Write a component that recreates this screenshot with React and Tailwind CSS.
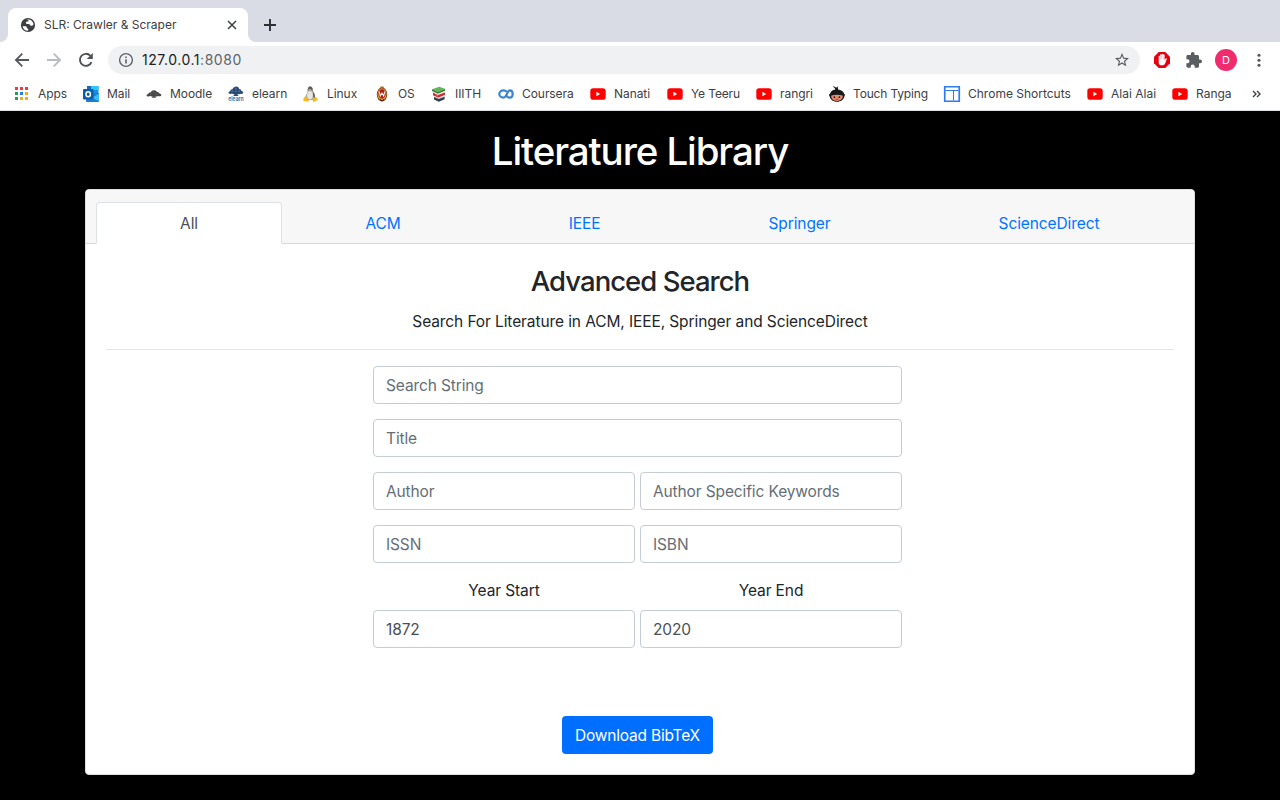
import React from "react";

/* ---------- browser icons ---------- */

const Globe = () => (
  <svg className="size-4 shrink-0" viewBox="0 0 16 16">
    <circle cx="8" cy="8" r="7.1" fill="#3c4043" />
    <path d="M2.6 9.2h2.7c1 0 1.6.7 1.6 1.6v.8h1.2v2.2C5.2 13.9 2.9 12 2.6 9.2z" fill="#fff" />
    <path d="M7 2.6c3.2-.8 6.3 1.6 6.5 4.9-.5 1-1.3 1.3-2.3 1.3-1.2 0-1.3-1.500-2.300-1.700H7.300c-.9 0-1.300-.6-1.300-1.300 0-.8.6-1.200 1.300-1.200h.9c.7 0 .9-1.300-.2-1.300z" fill="#fff" />
  </svg>
);

const Close = () => (
  <svg className="size-3 shrink-0" viewBox="0 0 12 12" stroke="#3c4043" strokeWidth="1.5">
    <path d="M2 2l8 8M10 2l-8 8" />
  </svg>
);

const Plus = () => (
  <svg className="size-3.5 shrink-0" viewBox="0 0 14 14" stroke="#2d2f33" strokeWidth="1.9">
    <path d="M7 1v12M1 7h12" />
  </svg>
);

const Arrow = ({ color, flip }) => (
  <svg className={flip ? "size-4 shrink-0 rotate-180" : "size-4 shrink-0"} viewBox="0 0 16 16" fill="none" stroke={color} strokeWidth="1.8">
    <path d="M15 8H2.3M8.3 1.6L1.9 8l6.4 6.4" />
  </svg>
);

const Reload = () => (
  <svg className="size-4 shrink-0" viewBox="0 0 16 16">
    <path d="M13.5 10.1A6 6 0 1 1 12.4 3.8" fill="none" stroke="#4e5256" strokeWidth="1.9" />
    <path d="M14.8 1v6.100H8.700z" fill="#4e5256" />
  </svg>
);

const Info = () => (
  <svg className="size-4 shrink-0" viewBox="0 0 16 16">
    <circle cx="8" cy="8" r="6.400" fill="none" stroke="#5f6368" strokeWidth="1.400" />
    <path d="M7.200 7.200h1.600v4.300H7.200zM7.200 4.500h1.600V6H7.200z" fill="#5f6368" />
  </svg>
);

const Star = () => (
  <svg className="size-4 shrink-0" viewBox="0 0 24 24" fill="#55595e">
    <path d="M22.500 9.140l-7.550-.65L12 1.540 9.050 8.500l-7.550.640 5.730 4.960L5.510 21.480 12 17.570l6.490 3.910-1.720-7.380 5.730-4.960zM12 15.500l-3.950 2.380 1.050-4.490-3.480-3.020 4.590-.4L12 5.740l1.800 4.240 4.590.4-3.480 3.020 1.050 4.490L12 15.500z" />
  </svg>
);

const AdBlock = () => (
  <svg className="size-4 shrink-0" viewBox="0 0 16 16">
    <path d="M4.700 0h6.600L16 4.700v6.600L11.300 16H4.700L0 11.300V4.700z" fill="#e60012" />
    <path d="M4.700 9V4.300c0-.9 1.400-.9 1.400 0V3c0-.9 1.500-.9 1.500 0v-.4c0-.9 1.500-.9 1.500 0V3c0-.9 1.500-.9 1.500 0v5.300l.9-1.600c.5-.7 1.500-.3 1.200.5l-1.500 4c-.5 1.300-1.400 2.100-2.900 2.100h-.8c-1.800 0-2.800-1.300-2.800-2.900z" fill="#fff" />
    <path d="M6.100 4v3.500M7.600 3.500v4M9.100 3.500v4" stroke="#e60012" strokeWidth=".2" />
  </svg>
);

const Puzzle = () => (
  <svg className="size-4 shrink-0" viewBox="1.500 1 21.500 21.500" fill="#5a5e63">
    <path d="M20.500 11H19V7c0-1.100-.9-2-2-2h-4V3.500a2.500 2.500 0 0 0-5 0V5H4c-1.100 0-2 .9-2 2v3.800h1.500a2.700 2.700 0 0 1 0 5.400H2V20c0 1.100.9 2 2 2h3.800v-1.500a2.700 2.700 0 0 1 5.400 0V22H17c1.100 0 2-.9 2-2v-4h1.500a2.500 2.500 0 0 0 0-5z" />
  </svg>
);

const Dots = () => (
  <svg className="h-4 w-1 shrink-0" viewBox="0 0 4 16" fill="#55595e">
    <circle cx="2" cy="3.200" r="1.550" />
    <circle cx="2" cy="8.200" r="1.550" />
    <circle cx="2" cy="13.200" r="1.550" />
  </svg>
);

/* ---------- bookmark favicons ---------- */

const Fav = ({ children }) => (
  <svg className="size-4 shrink-0 overflow-visible" viewBox="0 0 16 16">{children}</svg>
);

const AppsIcon = () => (
  <Fav>
    {["#f4364c", "#f4364c", "#f4364c", "#1e9e58", "#2a7de1", "#fba919", "#1e9e58", "#fba919", "#fba919"].map((c, i) => (
      <rect key={i} x={1 + (i % 3) * 5} y={1 + Math.floor(i / 3) * 5} width="3" height="3" fill={c} />
    ))}
  </Fav>
);

const Outlook = () => (
  <Fav>
    <path d="M4 0h11.500v8H4z" fill="#1490df" />
    <path d="M4 0h4v4H4z" fill="#0f6cbd" />
    <path d="M8 0h7.500v4H8z" fill="#35c3f3" />
    <path d="M3 8l13-1v8c0 .6-.4 1-1 1H4c-.6 0-1-.4-1-1z" fill="#1a7fd3" />
    <path d="M16 7.500V15l-7-3z" fill="#36bdf2" />
    <rect y="3" width="10.500" height="10.500" rx="1" fill="#0a5cad" />
    <ellipse cx="5.200" cy="8.200" rx="2.200" ry="2.500" fill="none" stroke="#fff" strokeWidth="1.500" />
  </Fav>
);

const Tree = () => (
  <Fav>
    <path d="M.8 9.900c-.6-1.100.4-2 1.500-2 .2-1.200 1.300-1.600 2.200-1.400C5 5.300 6.600 4.100 8 4.300c1.300-.2 2.500.7 3 1.700 1.400-.2 2.200.6 2.400 1.600 1.300.2 2.300 1.100 1.700 2.100-1 .8-2.200.6-3.100.3-.9.600-2 .6-2.800.3.100.6.500 1.100 1.100 1.500H5.500c.7-.4 1-.9 1-1.500-.9.300-1.700.1-2.300-.3-1.200.5-2.500.6-3.400-.1z" fill="#484848" />
    <path d="M4 8.300l1.500-.5M7 6.300l1.500.3M9.500 8.500l1.700-.5" stroke="#777" strokeWidth=".6" />
  </Fav>
);

const Elearn = () => (
  <Fav>
    <path d="M.8 7.300C0 6.300 1 5 2.300 5.200c0-1.500 1-2.300 2.200-2C5 1.600 6.500.4 8 .7c1.500-.4 2.900.7 3.100 2.200 1.500 0 2.300.8 2.300 2 1.400 0 2.300 1.400 1.600 2.400-1 .9-2.100.8-3 .4-.8.700-1.800.8-2.700.4 0 .8.600 1.300 1.500 1.900H5.100c.9-.5 1.300-1 1.300-1.900-.8.300-1.700.1-2.300-.5-1.100.6-2.400.6-3.300-.3z" fill="#2b4a73" />
    <path d="M3.500 5.300l1.800-.4M7 2.700l1.700.4M7 5.500l1.500-.4M10.200 5.500l1.900-.6" stroke="#7d9bc0" strokeWidth=".7" />
    <text x="8" y="15.400" textAnchor="middle" textLength="15.400" lengthAdjust="spacingAndGlyphs" fontFamily="Inter, sans-serif" fontWeight="700" fontSize="5.600" fill="#3f74ad">elearn</text>
  </Fav>
);

const Tux = () => (
  <Fav>
    <path d="M6 .8c1.700-1 3.300.2 3.500 1.700.2 2.500 1.200 3.300 2 5 .8 1.700 1 3.500.2 5L9.500 14h-5l-2-3c.2-2 1.300-3.300 1.900-5 .4-1.200 0-4.200 1.600-5.200z" fill="#a9a8a3" />
    <path d="M6 .8c1.700-1 3.300.2 3.500 1.700.1 1 .3 1.800.5 2.300L8.500 4 6 3.500 4.600 4.800C4.800 3.200 4.900 1.500 6 .8zM10 6c1.500 1.500 2.300 4 1.700 6.300l-1.500-1z" fill="#5d5d5b" />
    <ellipse cx="7" cy="9.200" rx="2.800" ry="4" fill="#e6e6e4" />
    <path d="M5.400 3.600l1.500-.6 1.500.7-1.400 1.100z" fill="#edb21d" />
    <path d="M2.200 10.200l2 1.100 1.700 2.900c.2 1-.5 1.500-1.500 1.400L.8 14.900c-.8-.3-.6-.9-.3-1.500l.1-1.500zM10 11l1.200.9 1.600-.9 1.900 1.900c.4.600 0 1-.6 1.300l-2.300 1.400c-1.300.5-2.200 0-2.100-1.200z" fill="#f4b91c" />
  </Fav>
);

const Crest = () => (
  <Fav>
    <path d="M6.500.6h3l1 1.800-2.500.8-2.500-.8z" fill="#b8862b" />
    <ellipse cx="8" cy="8.500" rx="5.200" ry="6.900" fill="#7a3a1a" />
    <ellipse cx="8" cy="8.200" rx="4.500" ry="6" fill="#dda234" />
    <ellipse cx="8" cy="8" rx="3.600" ry="4.700" fill="#b51c1d" />
    <path d="M5.300 5.600l1 4.400L8 7l1.700 3 1-4.400" fill="none" stroke="#fff3e8" strokeWidth="1.100" />
    <path d="M6 13.200l2 1.800 2-1.800" fill="none" stroke="#3c1d12" />
  </Fav>
);

const Books = () => (
  <Fav>
    <path d="M1 3.200L8.300.8 14.500 3 7 6z" fill="#68b35a" />
    <path d="M1 3.200v1.700L7 7.700l7-2.900V3L7 6z" fill="#2f7b35" />
    <path d="M1.500 5.600l5.400 2.300 6.600-2.700v2.200L7 10.100 1.500 7.600z" fill="#e6e0d8" />
    <path d="M2 6.700l5.200 2.400L14 6.500v2.300l-6.800 2.900L2 9.200z" fill="#d12730" />
    <path d="M3 9.900l4.500 2 6.800-2.800v1.300l-6.700 2.900L3 11.200z" fill="#d9dbe0" />
    <path d="M3 11.100l4.800 2 5.800-2.300v2.500l-5.800 2.400L3 13.500z" fill="#323a4c" />
    <path d="M4.500 8.700l2.700 1.200" stroke="#f5c7c4" strokeWidth=".5" />
  </Fav>
);

const CourseraIcon = () => (
  <Fav>
    <path d="M8.700 5.700C7.800 4.700 6.600 4.400 5.400 4.400 3 4.400 1.300 6 1.300 8s1.700 3.600 4.100 3.600c3.700 0 3.500-7.200 6.400-7.200 1.700 0 2.900 1.600 2.900 3.600s-1.200 3.600-3.100 3.600c-1.400 0-2.400-.7-3.100-1.800" fill="none" stroke="#3a86ce" strokeWidth="2.200" />
  </Fav>
);

const YouTube = () => (
  <Fav>
    <rect x=".3" y="2.300" width="15.400" height="11.400" rx="2.800" fill="#ff0000" />
    <path d="M6.400 5.800v4.400L10.200 8z" fill="#fff" />
  </Fav>
);

const Ninja = () => (
  <Fav>
    <path d="M3.600.4c1.500 0 3 .4 3.600 1.300L8.600.3l.5 3.200c3 .3 5.500 2 6.100 4.600.9 0 1 1.500.2 2.200C14.800 13.700 12 15.800 8 15.800S1.400 13.700.6 10.300C-.3 9.500-.1 8 .9 8.100 1.400 5.800 3.400 4 6.300 3.600 6.400 2.600 5.300 1.300 3.600.4z" fill="#171717" />
    <path d="M2.300 9.500c3.400-1.100 8-1.100 11.400 0 .6 3-2 5.400-5.700 5.400s-6.300-2.400-5.700-5.400z" fill="#e88d72" />
    <circle cx="5.400" cy="11.200" r=".9" fill="#2b1612" />
    <circle cx="10.400" cy="11.200" r=".9" fill="#2b1612" />
    <path d="M6.500 13.300h3" stroke="#7d3529" strokeWidth=".7" />
  </Fav>
);

const Shortcuts = () => (
  <Fav>
    <path d="M.75.750h14.500v14.500H.750z" fill="none" stroke="#2f7bee" strokeWidth="1.700" />
    <path d="M1.500 4.500h13M9.500 4.500V14.500" fill="none" stroke="#2f7bee" strokeWidth="1" />
  </Fav>
);

const bookmarks = [
  { icon: AppsIcon, label: "Apps", w: "w-[29px]" },
  { icon: Outlook, label: "Mail", w: "w-[23px]" },
  { icon: Tree, label: "Moodle", w: "w-[42px]" },
  { icon: Elearn, label: "elearn", w: "w-[35px]" },
  { icon: Tux, label: "Linux", w: "w-[31px]" },
  { icon: Crest, label: "OS", w: "w-[17px]" },
  { icon: Books, label: "IIITH", w: "w-[27px]" },
  { icon: CourseraIcon, label: "Coursera", w: "w-[52px]" },
  { icon: YouTube, label: "Nanati", w: "w-[37px]" },
  { icon: YouTube, label: "Ye Teeru", w: "w-[49px]", track: "tracking-[-0.13px]" },
  { icon: YouTube, label: "rangri", w: "w-[33px]" },
  { icon: Ninja, label: "Touch Typing", w: "w-[75px]", track: "tracking-[-0.17px]" },
  { icon: Shortcuts, label: "Chrome Shortcuts", w: "w-[103px]", track: "tracking-normal" },
  { icon: YouTube, label: "Alai Alai", w: "w-[45px]", track: "tracking-normal" },
  { icon: YouTube, label: "Ranga", w: "w-[37px]", track: "tracking-normal" },
];

/* ---------- page ---------- */

const tabs = [
  { label: "ACM", w: "w-[202px]" },
  { label: "IEEE", w: "w-[201px]" },
  { label: "Springer", w: "w-[229px]" },
  { label: "ScienceDirect", w: "w-[270px]" },
];

const Field = (props) => (
  <input
    className="h-[38px] w-full min-w-0 rounded border border-[#c5ccd6] bg-white px-3 text-[15.5px] tracking-[-0.12px] text-[#495057] outline-none placeholder:text-[#656e76]"
    {...props}
  />
);

export default function App() {
  return (
    <div className="flex h-[800px] w-[1280px] flex-col overflow-hidden bg-black font-['Inter',sans-serif]">
      <div className="flex h-[42px] shrink-0 items-end bg-[#d9dce4]">
        <div className="h-2 w-2 bg-white">
          <div className="size-2 rounded-br-lg bg-[#d9dce4]" />
        </div>
        <div className="flex h-[34px] w-60 items-center rounded-t-lg bg-white pr-[10px] pl-3 text-xs text-[#3c4043]">
          <Globe />
          <span className="ml-2 flex-1 whitespace-nowrap">SLR: Crawler &amp; Scraper</span>
          <Close />
        </div>
        <div className="h-2 w-2 bg-white">
          <div className="size-2 rounded-bl-lg bg-[#d9dce4]" />
        </div>
        <div className="flex h-[34px] items-center pl-[7px]">
          <Plus />
        </div>
      </div>

      <div className="flex h-9 shrink-0 items-center bg-white pl-[14px]">
        <Arrow color="#55595e" />
        <div className="ml-4 flex"><Arrow color="#b9bbbe" flip /></div>
        <div className="ml-4 flex"><Reload /></div>
        <div className="ml-[14px] flex h-7 w-[1032px] items-center rounded-full bg-[#eff1f3] px-[10px]">
          <Info />
          <span className="ml-2 flex-1 text-sm tracking-[0.54px] text-[#5f6368]">
            <span className="text-[#202124]">127.0.0.1</span>:8080
          </span>
          <Star />
        </div>
        <div className="ml-[14px] flex"><AdBlock /></div>
        <div className="ml-4 flex"><Puzzle /></div>
        <div className="ml-[13px] flex size-[22px] items-center justify-center rounded-full bg-[#f02b6e] text-[11px] text-white">D</div>
        <div className="ml-[19.5px] flex"><Dots /></div>
      </div>

      <div className="flex h-[33px] shrink-0 items-center gap-4 border-b border-[#dcdee1] bg-white pb-px pl-[14px] text-xs text-[#3c4043]">
        {bookmarks.map(({ icon: Icon, label, w, track }, i) => (
          <div key={i} className="flex items-center gap-2">
            <Icon />
            <span className={`${w} ${track || "tracking-[-0.06px]"} whitespace-nowrap`}>{label}</span>
          </div>
        ))}
        <svg className="ml-0.5 size-3 shrink-0" viewBox="0 0 12 12" fill="none" stroke="#3c4043" strokeWidth="1.400">
          <path d="M2 3l3 3-3 3M6 3l3 3-3 3" />
        </svg>
      </div>

      <h1 className="mt-4 h-[62px] text-center text-[38.5px] leading-[48px] font-[550] tracking-[-1.1px] text-white">Literature Library</h1>

      <div className="mx-auto flex h-[586px] w-[1110px] flex-col rounded border border-[#dfdfdf] bg-white text-[15.5px] tracking-[-0.1px] text-[#212529]">
        <div className="flex h-[54px] shrink-0 items-end rounded-t-[3px] border-b border-[#d8d8d8] bg-[#f7f7f7] pl-[10px]">
          <div className="-mb-px flex h-[42px] w-[186px] items-center justify-center rounded-t border border-[#dee2e6] border-b-white bg-white pt-0.5 text-[#495057]">All</div>
          {tabs.map(({ label, w }) => (
            <a key={label} className={`${w} flex h-10 items-center justify-center pt-0.5 text-[#0073ff]`}>{label}</a>
          ))}
        </div>

        <div className="flex flex-col px-5 pt-5">
          <h2 className="h-[46px] text-center text-[27.5px] leading-[35px] font-[550] tracking-[-0.97px]">Advanced Search</h2>
          <p className="h-[39px] text-center leading-6">Search For Literature in ACM, IEEE, Springer and ScienceDirect</p>
          <div className="h-px bg-[#e5e5e5]" />
          <form className="mt-4 ml-[267px] grid w-[529px] grid-cols-2 gap-x-[5px] gap-y-[15px]">
            <div className="col-span-2"><Field placeholder="Search String" /></div>
            <div className="col-span-2"><Field placeholder="Title" /></div>
            <Field placeholder="Author" />
            <Field placeholder="Author Specific Keywords" />
            <Field placeholder="ISSN" />
            <Field placeholder="ISBN" />
            <label className="flex flex-col gap-[7px] pt-px text-center leading-6">
              Year Start
              <Field defaultValue="1872" />
            </label>
            <label className="flex flex-col gap-[7px] pt-px text-center leading-6">
              Year End
              <Field defaultValue="2020" />
            </label>
            <button type="button" className="col-span-2 mt-[53px] h-[38px] w-[151px] justify-self-center rounded bg-[#006fff] pt-0.5 text-center tracking-[-0.2px] whitespace-nowrap text-white">Download BibTeX</button>
          </form>
        </div>
      </div>
    </div>
  );
}
